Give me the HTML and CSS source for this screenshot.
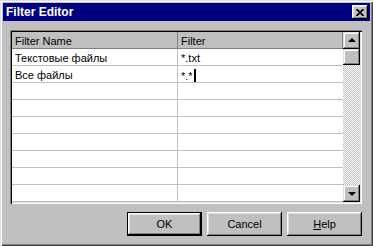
FILE: index.html
```html
<!DOCTYPE html>
<html lang="ru">
<head>
  <meta charset="UTF-8" />
  <title>Filter Editor</title>
  <link rel="stylesheet" href="styles.css">
</head>
<body>
  <div class="window">
    <div class="titlebar">
      <span class="title">Filter Editor</span>
      <button class="close" aria-label="Close">
        <svg width="8" height="7" viewBox="0 0 8 7"><path d="M0.5 0 L7.5 7 M7.5 0 L0.5 7" stroke="#000" stroke-width="1.7" fill="none"/></svg>
      </button>
    </div>

    <div class="grid-frame">
      <div class="grid">
        <div class="cell head">Filter Name</div>
        <div class="cell head">Filter</div>
        <div class="cell">Текстовые файлы</div>
        <div class="cell">*.txt</div>
        <div class="cell">Все файлы</div>
        <div class="cell">*.*<span class="caret"></span></div>
        <div class="cell"></div><div class="cell"></div>
        <div class="cell"></div><div class="cell"></div>
        <div class="cell"></div><div class="cell"></div>
        <div class="cell"></div><div class="cell"></div>
        <div class="cell"></div><div class="cell"></div>
        <div class="cell"></div><div class="cell"></div>
        <div class="cell"></div><div class="cell"></div>
      </div>
      <div class="scrollbar">
        <div class="sb-btn"><span class="arrow up"></span></div>
        <div class="sb-btn thumb"></div>
        <div class="track"></div>
        <div class="sb-btn"><span class="arrow down"></span></div>
      </div>
    </div>

    <div class="buttons">
      <button class="btn default">OK</button>
      <button class="btn">Cancel</button>
      <button class="btn"><u>H</u>elp</button>
    </div>
  </div>
</body>
</html>
```

FILE: styles.css
```css
body {
  margin: 0;
  background: #c0c0c0;
  font-family: "Liberation Sans", Arial, sans-serif;
  font-size: 11px;
}

.window {
  width: 373px;
  height: 246px;
  box-sizing: border-box;
  padding: 3px;
  background: #c0c0c0;
  box-shadow: inset 1px 1px #dfdfdf, inset 2px 2px #fff, inset -1px -1px #404040, inset -2px -2px #808080;
  display: flex;
  flex-direction: column;
}

.titlebar {
  height: 18px;
  background: #000080;
  color: #fff;
  display: flex;
  align-items: center;
  justify-content: space-between;
  padding: 0 2px 0 3px;
}
.title {
  font-weight: bold;
  font-size: 12px;
}
.close {
  width: 16px;
  height: 14px;
  padding: 0;
  border: none;
  background: #c0c0c0;
  box-shadow: inset -1px -1px #000, inset 1px 1px #fff, inset -2px -2px #808080, inset 2px 2px #dfdfdf;
  display: flex;
  align-items: center;
  justify-content: center;
}

.grid-frame {
  margin: 9px 0 0 7px;
  width: 352px;
  height: 174px;
  box-sizing: border-box;
  padding: 2px;
  box-shadow: inset 1px 1px #808080, inset 2px 2px #000, inset -1px -1px #fff, inset -2px -2px #dfdfdf;
  display: flex;
}

.grid {
  width: 331px;
  display: grid;
  grid-template-columns: 166px 165px;
  grid-auto-rows: 17px;
  background: #fff;
}
.cell {
  box-sizing: border-box;
  border-bottom: 1px solid #c0c0c0;
  padding: 3px 0 0 3px;
  line-height: 13px;
  white-space: nowrap;
  overflow: hidden;
}
.cell:nth-child(odd) {
  border-right: 1px solid #c0c0c0;
}
.cell.head {
  background: #c0c0c0;
  border-bottom: 1px solid #808080;
  border-right: 1px solid #808080;
}
.caret {
  display: inline-block;
  width: 2px;
  height: 14px;
  background: #000;
  vertical-align: -3px;
  margin-left: 1px;
}

.scrollbar {
  width: 17px;
  display: flex;
  flex-direction: column;
}
.sb-btn {
  height: 17px;
  flex: none;
  background: #c0c0c0;
  box-shadow: inset -1px -1px #000, inset 1px 1px #dfdfdf, inset -2px -2px #808080, inset 2px 2px #fff;
  display: flex;
  align-items: center;
  justify-content: center;
}
.sb-btn.thumb {
  height: 16px;
}
.track {
  flex: 1;
  background: repeating-conic-gradient(#c0c0c0 0 25%, #fff 0 50%) 0 0 / 2px 2px;
}
.arrow {
  width: 0;
  height: 0;
  border-left: 4px solid transparent;
  border-right: 4px solid transparent;
}
.arrow.up {
  border-bottom: 4px solid #000;
  margin-top: -1px;
}
.arrow.down {
  border-top: 4px solid #000;
  margin-top: 1px;
}

.buttons {
  display: flex;
  justify-content: flex-end;
  gap: 5px;
  margin: 8px 8px 0 0;
}
.btn {
  width: 75px;
  height: 24px;
  padding: 0;
  border: none;
  background: #c0c0c0;
  font-family: "Liberation Sans", Arial, sans-serif;
  font-size: 11px;
  color: #000;
  box-shadow: inset -1px -1px #000, inset 1px 1px #fff, inset -2px -2px #808080, inset 2px 2px #dfdfdf;
}
.btn.default {
  box-shadow: inset 0 0 0 1px #000, inset -2px -2px #000, inset 2px 2px #fff, inset -3px -3px #808080, inset 3px 3px #dfdfdf;
}
```
